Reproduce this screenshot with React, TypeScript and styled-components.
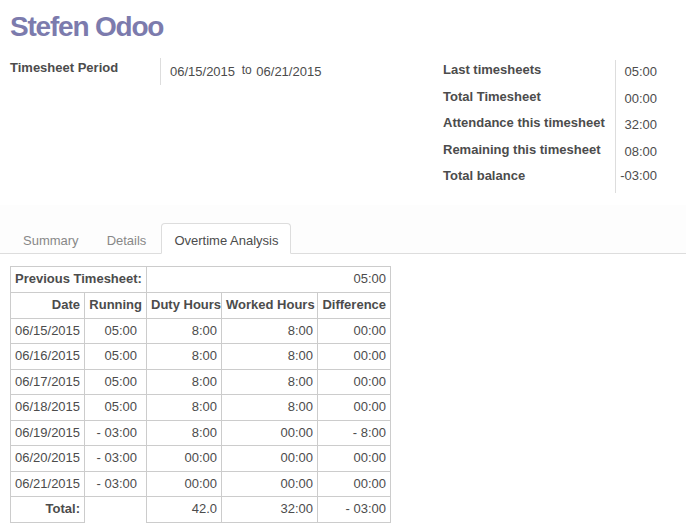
import React from "react";
import styled, { createGlobalStyle } from "styled-components";

const GlobalStyle = createGlobalStyle`
  html, body {
    margin: 0;
    background: #ffffff;
    font-family: "Liberation Sans", Arial, sans-serif;
    font-size: 13px;
    color: #4c4c4c;
  }
  * { box-sizing: border-box; }
`;

const Page = styled.div`
  width: 686px;
`;

const Title = styled.h1`
  margin: 11px 0 0;
  padding-left: 10px;
  font-size: 28px;
  line-height: 31px;
  letter-spacing: -1.2px;
  font-weight: bold;
  color: #7c7bad;
`;

const Header = styled.div`
  display: flex;
  align-items: flex-start;
  margin-top: 16px;
`;

const PeriodGroup = styled.div`
  display: flex;
  width: 433px;
  padding-left: 10px;
`;

const FieldLabel = styled.div`
  width: 150px;
  padding-top: 2px;
  font-weight: bold;
  line-height: 16px;
`;

const PeriodValue = styled.div`
  border-left: 1px solid #dddddd;
  padding: 4px 0 5px 9px;
  line-height: 16px;
  white-space: nowrap;
`;

const ToWord = styled.span`
  font-size: 12px;
  vertical-align: 2px;
  margin: 0 1px 0 3px;
`;

const TotalsGroup = styled.div`
  display: flex;
  margin-top: 2px;
  padding-left: 10px;
`;

const LabelStack = styled.div`
  display: flex;
  flex-direction: column;
  width: 172px;
`;

const ValueStack = styled.div`
  display: flex;
  flex-direction: column;
  width: 42px;
  border-left: 1px solid #dddddd;
`;

const TotalLabel = styled.div`
  height: 26.5px;
  padding-top: 2px;
  font-weight: bold;
  line-height: 16px;
  white-space: nowrap;
`;

const TotalValue = styled.div<{ $raised?: boolean }>`
  height: 26.5px;
  padding-top: ${(p) => (p.$raised ? "1.5px" : "4px")};
  line-height: 16px;
  text-align: right;
  white-space: nowrap;
`;

const TabBar = styled.div`
  display: flex;
  margin-top: 12px;
  padding: 18px 0 0 10px;
  background: #fdfdfd;
  border-bottom: 1px solid #dddddd;
`;

const Tab = styled.div<{ $active?: boolean }>`
  padding: 9px 12px 4px;
  line-height: 16px;
  margin-right: 2px;
  margin-bottom: -1px;
  border: 1px solid transparent;
  border-radius: 4px 4px 0 0;
  color: ${(p) => (p.$active ? "#4c4c4c" : "#888888")};
  ${(p) =>
    p.$active &&
    `
    border-color: #dddddd #dddddd transparent;
    background: #ffffff;
  `}
`;

const Table = styled.table`
  margin: 12px 0 0 10px;
  border-collapse: collapse;
  table-layout: fixed;
  width: 380px;
`;

const HeadRow = styled.tr`
  height: 26px;
`;

const BodyRow = styled.tr`
  height: 25.5px;
`;

const Cell = styled.td<{
  $left?: boolean;
  $bold?: boolean;
  $wide?: boolean;
  $open?: boolean;
}>`
  border: 1px solid #cccccc;
  ${(p) => p.$open && "border-bottom: none;"}
  padding: 0 ${(p) => (p.$wide ? "9px" : "4px")} 0 4px;
  text-align: ${(p) => (p.$left ? "left" : "right")};
  font-weight: ${(p) => (p.$bold ? "bold" : "normal")};
  white-space: nowrap;
  vertical-align: middle;
  line-height: 16px;
`;

const rows: [string, string, string, string, string][] = [
  ["06/15/2015", "05:00", "8:00", "8:00", "00:00"],
  ["06/16/2015", "05:00", "8:00", "8:00", "00:00"],
  ["06/17/2015", "05:00", "8:00", "8:00", "00:00"],
  ["06/18/2015", "05:00", "8:00", "8:00", "00:00"],
  ["06/19/2015", "- 03:00", "8:00", "00:00", "- 8:00"],
  ["06/20/2015", "- 03:00", "00:00", "00:00", "00:00"],
  ["06/21/2015", "- 03:00", "00:00", "00:00", "00:00"],
];

const totals: { label: string; value: string; raised?: boolean }[] = [
  { label: "Last timesheets", value: "05:00" },
  { label: "Total Timesheet", value: "00:00" },
  { label: "Attendance this timesheet", value: "32:00" },
  { label: "Remaining this timesheet", value: "08:00" },
  { label: "Total balance", value: "-03:00", raised: true },
];

export default function App() {
  return (
    <Page>
      <GlobalStyle />
      <Title>Stefen Odoo</Title>
      <Header>
        <PeriodGroup>
          <FieldLabel>Timesheet Period</FieldLabel>
          <PeriodValue>
            06/15/2015 <ToWord>to</ToWord> 06/21/2015
          </PeriodValue>
        </PeriodGroup>
        <TotalsGroup>
          <LabelStack>
            {totals.map((t) => (
              <TotalLabel key={t.label}>{t.label}</TotalLabel>
            ))}
          </LabelStack>
          <ValueStack>
            {totals.map((t) => (
              <TotalValue key={t.label} $raised={t.raised}>
                {t.value}
              </TotalValue>
            ))}
          </ValueStack>
        </TotalsGroup>
      </Header>
      <TabBar>
        <Tab>Summary</Tab>
        <Tab>Details</Tab>
        <Tab $active>Overtime Analysis</Tab>
      </TabBar>
      <Table>
        <colgroup>
          <col style={{ width: 74 }} />
          <col style={{ width: 62 }} />
          <col style={{ width: 75 }} />
          <col style={{ width: 96 }} />
          <col style={{ width: 73 }} />
        </colgroup>
        <tbody>
          <HeadRow>
            <Cell colSpan={2} $left $bold>
              Previous Timesheet:
            </Cell>
            <Cell colSpan={3}>05:00</Cell>
          </HeadRow>
          <HeadRow>
            <Cell $bold>Date</Cell>
            <Cell $bold>Running</Cell>
            <Cell $bold>Duty Hours</Cell>
            <Cell $bold>Worked Hours</Cell>
            <Cell $bold>Difference</Cell>
          </HeadRow>
          {rows.map((r) => (
            <BodyRow key={r[0]}>
              <Cell>{r[0]}</Cell>
              <Cell $wide>{r[1]}</Cell>
              <Cell>{r[2]}</Cell>
              <Cell>{r[3]}</Cell>
              <Cell>{r[4]}</Cell>
            </BodyRow>
          ))}
          <BodyRow>
            <Cell $bold>Total:</Cell>
            <Cell $open />
            <Cell>42.0</Cell>
            <Cell>32:00</Cell>
            <Cell>- 03:00</Cell>
          </BodyRow>
        </tbody>
      </Table>
    </Page>
  );
}
